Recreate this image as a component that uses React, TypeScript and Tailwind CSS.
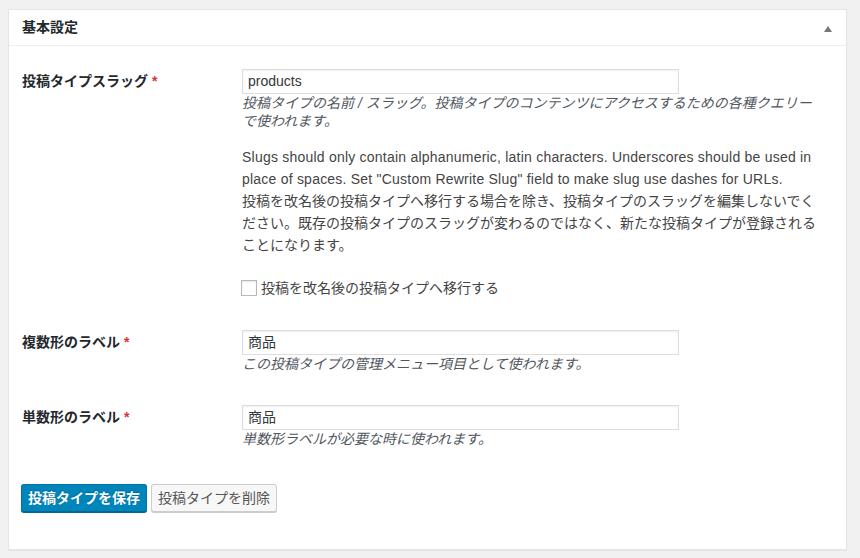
import React from "react";

const font = "font-['Liberation_Sans','Noto_Sans_CJK_JP',sans-serif]";

function Label({ text }: { text: string }) {
  return (
    <div className="h-[25px] flex items-center text-[14px] font-bold text-[#23282d] pl-px">
      {text}
      <span className="text-[#dc3232] ml-[4px]">*</span>
    </div>
  );
}

function TextInput({ value }: { value: string }) {
  return (
    <div className="h-[25px] w-[437px] border border-[#ddd] bg-white shadow-[inset_0_1px_2px_rgba(0,0,0,0.07)] flex items-center pl-[5px] text-[14px] text-[#32373c]">
      {value}
    </div>
  );
}

export default function App() {
  return (
    <div className={`w-[860px] h-[558px] bg-[#f1f1f1] pt-[9px] pl-[8px] ${font}`}>
      <div className="w-[839px] h-[541px] bg-white border border-[#e5e5e5] shadow-[0_1px_1px_rgba(0,0,0,0.04)]">
        <div className="h-[36px] border-b border-[#eee] flex items-center justify-between pl-[13px] pr-[14px]">
          <span className="text-[14px] font-bold text-[#23282d]">基本設定</span>
          <svg width="8" height="6" viewBox="0 0 8 6" className="mt-[2px]">
            <polygon points="4,0 8,6 0,6" fill="#72777c" />
          </svg>
        </div>
        <div className="pl-[12px] pt-[23px]">
          <div className="grid grid-cols-[221px_585px]">
            <Label text="投稿タイプスラッグ" />
            <div>
              <TextInput value="products" />
              <p className="italic text-[14px] leading-[18px] text-[#50575e]">
                投稿タイプの名前 / スラッグ。投稿タイプのコンテンツにアクセスするための各種クエリー
                <br />
                で使われます。
              </p>
              <p className="mt-[16px] text-[14px] leading-[22px] text-[#444]">
                <span className="tracking-[0.22px]">
                  Slugs should only contain alphanumeric, latin characters. Underscores should be used in
                </span>
                <br />
                <span className="tracking-[0.22px]">
                  place of spaces. Set "Custom Rewrite Slug" field to make slug use dashes for URLs.
                </span>
                <br />
                投稿を改名後の投稿タイプへ移行する場合を除き、投稿タイプのスラッグを編集しないでく
                <br />
                ださい。既存の投稿タイプのスラッグが変わるのではなく、新たな投稿タイプが登録される
                <br />
                ことになります。
              </p>
              <label className="mt-[21px] h-[22px] flex items-center text-[14px] text-[#444]">
                <span className="w-[16px] h-[16px] border border-[#b4b9be] bg-white shadow-[inset_0_1px_2px_rgba(0,0,0,0.1)] mr-[4px] -ml-px" />
                投稿を改名後の投稿タイプへ移行する
              </label>
            </div>
          </div>

          <div className="grid grid-cols-[221px_585px] mt-[31px]">
            <Label text="複数形のラベル" />
            <div>
              <TextInput value="商品" />
              <p className="italic text-[14px] leading-[18px] text-[#50575e]">
                この投稿タイプの管理メニュー項目として使われます。
              </p>
            </div>
          </div>

          <div className="grid grid-cols-[221px_585px] mt-[32px]">
            <Label text="単数形のラベル" />
            <div>
              <TextInput value="商品" />
              <p className="italic text-[14px] leading-[18px] text-[#50575e]">
                単数形ラベルが必要な時に使われます。
              </p>
            </div>
          </div>

          <div className="mt-[36px] flex gap-[4px]">
            <button className="h-[28px] w-[126px] rounded-[3px] bg-[#0085ba] border border-[#0073aa] border-b-[#006799] shadow-[0_1px_0_#006799] text-white text-[14px] font-bold [text-shadow:0_-1px_1px_#006799]">
              投稿タイプを保存
            </button>
            <button className="h-[28px] w-[126px] rounded-[3px] bg-[#f7f7f7] border border-[#ccc] shadow-[0_1px_0_#ccc] text-[#555] text-[14px]">
              投稿タイプを削除
            </button>
          </div>
        </div>
      </div>
    </div>
  );
}
